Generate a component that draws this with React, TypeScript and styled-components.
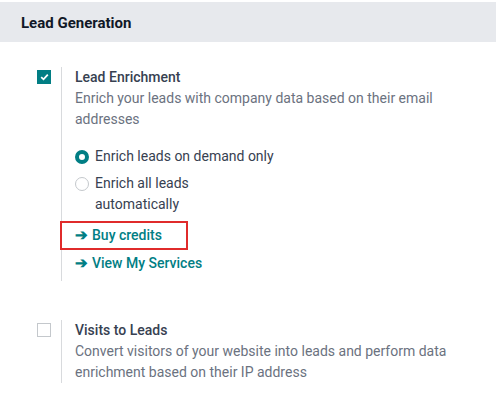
import * as React from "react";
import styled, { createGlobalStyle } from "styled-components";

const GlobalStyle = createGlobalStyle`
  body {
    margin: 0;
    background: #ffffff;
    font-family: Roboto, "Noto Sans", sans-serif;
    font-size: 14px;
    color: #374151;
  }
`;

const Page = styled.div`
  padding-top: 2px;
`;

const SectionHeader = styled.h2`
  margin: 0;
  height: 40px;
  padding-left: 21px;
  padding-top: 2px;
  box-sizing: border-box;
  display: flex;
  align-items: center;
  background: #e7e9ed;
  font-size: 15px;
  font-weight: 700;
  color: #111827;
`;

const SettingsBlock = styled.div`
  display: flex;
  flex-direction: column;
  gap: 39px;
  padding-top: 25px;
`;

const Setting = styled.div`
  display: flex;
  align-items: flex-start;
`;

const LeftPane = styled.div`
  width: 61px;
  flex: 0 0 61px;
  padding-left: 37px;
  padding-top: 3px;
  box-sizing: border-box;
`;

const RightPane = styled.div<{ $tail: number }>`
  border-left: 1px solid #d8dadd;
  padding-left: 13px;
  padding-bottom: ${(p) => p.$tail}px;
  width: 420px;
  box-sizing: border-box;
  line-height: 21px;
`;

const Checkbox = styled.span<{ $checked?: boolean }>`
  display: flex;
  align-items: center;
  justify-content: center;
  width: 14px;
  height: 14px;
  box-sizing: border-box;
  border: 1px solid ${(p) => (p.$checked ? "#017e84" : "#c4c8cc")};
  background: ${(p) => (p.$checked ? "#017e84" : "#ffffff")};
`;

const Title = styled.div`
  font-weight: 500;
  color: #374151;
`;

const Description = styled.div`
  color: #6b7280;
`;

const RadioGroup = styled.div`
  display: flex;
  flex-direction: column;
  gap: 6px;
  margin-top: 16px;
  width: 200px;
`;

const RadioRow = styled.label`
  display: flex;
  align-items: flex-start;
  gap: 6px;
  color: #374151;
`;

const RadioDot = styled.span<{ $checked?: boolean }>`
  flex: 0 0 14px;
  width: 14px;
  height: 14px;
  margin-top: 4px;
  border-radius: 50%;
  box-sizing: border-box;
  border: ${(p) => (p.$checked ? "4px solid #017e84" : "1px solid #c4c8cc")};
  background: #ffffff;
`;

const Links = styled.div`
  display: flex;
  flex-direction: column;
  gap: 7px;
  margin-top: 10px;
`;

const ActionLink = styled.a<{ $marked?: boolean }>`
  position: relative;
  align-self: flex-start;
  color: #017e84;
  font-weight: 500;
  text-decoration: none;

  ${(p) =>
    p.$marked &&
    `
    &::after {
      content: "";
      position: absolute;
      left: -15px;
      right: -26px;
      top: -4px;
      bottom: -4px;
      border: 2px solid #e02b2b;
    }
  `}
`;

const Arrow = styled.span`
  display: inline-block;
  margin-right: 4px;
  font-size: 15px;
  font-weight: 700;
`;

export default function App() {
  return (
    <Page>
      <GlobalStyle />
      <SectionHeader>Lead Generation</SectionHeader>
      <SettingsBlock>
        <Setting>
          <LeftPane>
            <Checkbox $checked>
              <svg width="9" height="8" viewBox="0 0 9 8">
                <path d="M1.2 4.2 L3.5 6.3 L7.8 1.6" fill="none" stroke="#fff" strokeWidth="1.8" />
              </svg>
            </Checkbox>
          </LeftPane>
          <RightPane $tail={7}>
            <Title>Lead Enrichment</Title>
            <Description>
              Enrich your leads with company data based on their email addresses
            </Description>
            <RadioGroup>
              <RadioRow>
                <RadioDot $checked />
                <span>Enrich leads on demand only</span>
              </RadioRow>
              <RadioRow>
                <RadioDot />
                <span>Enrich all leads automatically</span>
              </RadioRow>
            </RadioGroup>
            <Links>
              <ActionLink $marked>
                <Arrow>➔</Arrow>Buy credits
              </ActionLink>
              <ActionLink>
                <Arrow>➔</Arrow>View My Services
              </ActionLink>
            </Links>
          </RightPane>
        </Setting>
        <Setting>
          <LeftPane>
            <Checkbox />
          </LeftPane>
          <RightPane $tail={0}>
            <Title>Visits to Leads</Title>
            <Description>
              Convert visitors of your website into leads and perform data enrichment based on their IP address
            </Description>
          </RightPane>
        </Setting>
      </SettingsBlock>
    </Page>
  );
}
